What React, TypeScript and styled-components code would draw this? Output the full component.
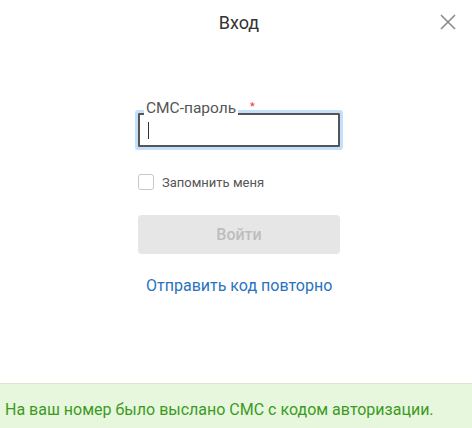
import React from 'react';
import styled, { createGlobalStyle } from 'styled-components';

const GlobalStyle = createGlobalStyle`
  html, body {
    margin: 0;
    padding: 0;
    background: #fff;
    font-family: Roboto, "Liberation Sans", Arial, sans-serif;
  }
`;

const SModal = styled.div`
  width: 472px;
  height: 428px;
  display: flex;
  flex-direction: column;
  background: #fff;
  overflow: hidden;
`;

const SHeader = styled.div`
  display: grid;
  grid-template-columns: 1fr auto 1fr;
  align-items: center;
  height: 44px;
`;

const STitle = styled.div`
  grid-column: 2;
  font-size: 18px;
  color: #333;
  padding-left: 6px;
`;

const SClose = styled.button`
  grid-column: 3;
  justify-self: end;
  margin-right: 14px;
  width: 20px;
  height: 20px;
  padding: 0;
  border: none;
  background: none;
  display: flex;
  align-items: center;
  justify-content: center;
  cursor: pointer;
`;

const SBody = styled.div`
  flex: 1;
  display: flex;
  flex-direction: column;
  padding: 69px 0 0 138px;
`;

const SField = styled.div`
  position: relative;
  width: 202px;
`;

const SLabel = styled.span`
  position: absolute;
  left: 6px;
  top: -14px;
  padding: 0 2px;
  background: #fff;
  font-size: 15.5px;
  color: #555;
  line-height: 18px;
`;

const SRequired = styled.span`
  position: absolute;
  left: 112px;
  top: -12px;
  color: #e53935;
  font-size: 11px;
  line-height: 11px;
`;

const SInput = styled.div`
  box-sizing: border-box;
  width: 202px;
  height: 34px;
  border: 2px solid #555;
  border-radius: 1px;
  box-shadow: 0 0 0 3px #c2dffb;
  display: flex;
  align-items: center;
  padding-left: 8px;
`;

const SCaret = styled.span`
  width: 1px;
  height: 17px;
  background: #333;
`;

const SCheckRow = styled.label`
  display: flex;
  align-items: center;
  gap: 8px;
  margin-top: 27px;
  font-size: 13px;
  color: #555;
`;

const SCheckbox = styled.span`
  box-sizing: border-box;
  width: 16px;
  height: 16px;
  border: 1px solid #c8c8c8;
  border-radius: 3px;
  background: #fff;
`;

const SButton = styled.button`
  margin-top: 25px;
  width: 202px;
  height: 39px;
  border: none;
  border-radius: 4px;
  background: #e6e6e6;
  color: #bdbdbd;
  font-family: inherit;
  font-size: 16px;
  font-weight: 500;
`;

const SLink = styled.a`
  margin-top: 22px;
  margin-left: 8px;
  font-size: 16px;
  color: #2a72c0;
  text-decoration: none;
`;

const SNotice = styled.div`
  border-top: 1px solid #d8e6d2;
  background: #e6f7dd;
  color: #3d9a1f;
  font-size: 16px;
  padding: 16px 5px 14px;
  height: 45px;
  box-sizing: border-box;
`;

const App = () => {
  return (
    <SModal>
      <GlobalStyle />
      <SHeader>
        <STitle>Вход</STitle>
        <SClose aria-label="Закрыть">
          <svg width="16" height="16" viewBox="0 0 16 16">
            <path d="M1 1 L15 15 M15 1 L1 15" stroke="#8a8a8a" strokeWidth="1.6" fill="none" />
          </svg>
        </SClose>
      </SHeader>
      <SBody>
        <SField>
          <SLabel>СМС-пароль</SLabel>
          <SRequired>*</SRequired>
          <SInput>
            <SCaret />
          </SInput>
        </SField>
        <SCheckRow>
          <SCheckbox />
          Запомнить меня
        </SCheckRow>
        <SButton disabled>Войти</SButton>
        <SLink href="#">Отправить код повторно</SLink>
      </SBody>
      <SNotice>На ваш номер было выслано СМС с кодом авторизации.</SNotice>
    </SModal>
  );
};

export default App;
